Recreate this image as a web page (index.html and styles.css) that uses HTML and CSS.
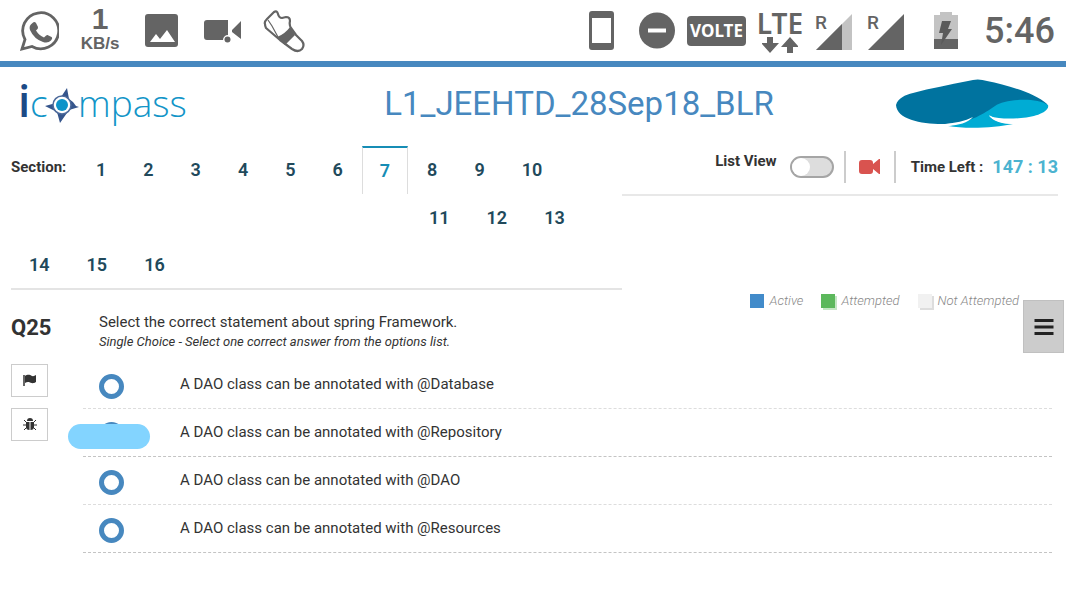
FILE: index.html
```html
<!DOCTYPE html>
<html lang="en">
<head>
<meta charset="utf-8">
<meta name="viewport" content="width=device-width, initial-scale=1">
<title>iCompass</title>
<link rel="stylesheet" href="styles.css">
</head>
<body>
<div class="status">
  <div class="status-left">
    <svg width="40" height="50" viewBox="0 0 40 50"><path d="M3 43l3-9.500A18 18 0 1 1 13 40.500z" fill="none" stroke="#646464" stroke-width="2.800"/><path d="M13.500 17q2-2 3.500 0l2 4q.5 1.500-2 3.500 3 5 8 7 2.500-3 3.500-2.500l4 2q1.500 1-.5 3.500-3 3-8 1.500-9-3-13-12-1.500-4.500 2.500-7z" fill="#646464"/></svg>
    <div class="speed"><span class="speed-value">1</span><span class="speed-unit">KB/s</span></div>
    <svg width="42" height="50" viewBox="0 0 42 50"><rect x="4" y="8" width="33" height="33" rx="3" fill="#646464"/><path d="M9 36l6-8 4 5 7-9 8 12z" fill="#fff"/></svg>
    <svg width="40" height="50" viewBox="0 0 40 50"><path d="M4 14h21v15a5 5 0 0 0-5 5H4q-3 0-3-3V17q0-3 3-3zM29 24l9-9v18l-9-7z" fill="#646464"/><circle cx="24.500" cy="33.500" r="3" fill="#646464"/></svg>
    <svg width="42" height="50" viewBox="0 0 42 50"><path d="M2 18Q1 16 4 13l7-7q3-2 4 2 1 4 4 4l4-1q4 0 4 4-1 4 1 7l5 7 6 6q3 4 0 8-4 4-10 0L17 34 3 22q-1-2-1-4z" fill="none" stroke="#646464" stroke-width="2.200" stroke-linejoin="round"/><path d="M14 31q8-3 13-10l5 8-10 10z" fill="#646464"/><path d="M5 14l4 6 6 11" fill="none" stroke="#646464" stroke-width="1.200"/></svg>
  </div>
  <div class="status-right">
    <svg width="38" height="50" viewBox="0 0 38 50"><path fill-rule="evenodd" d="M3 5h19q3 0 3 3v33q0 3-3 3H3q-3 0-3-3V8q0-3 3-3zm0 7v25h19V12z" fill="#646464"/></svg>
    <svg width="36" height="50" viewBox="0 0 36 50"><circle cx="18" cy="24.500" r="18" fill="#646464"/><path d="M9 24.500h18" stroke="#fff" stroke-width="4"/></svg>
    <span class="volte">VOLTE</span>
    <div class="lte"><span>LTE</span><svg width="36" height="16" viewBox="0 0 36 16"><path d="M5 0h6v6h6l-9 10-9-10h6zM25 16h6v-6h6L28 0l-9 10h6z" fill="#646464"/></svg></div>
    <div class="signal"><span>R</span><svg width="36" height="36" viewBox="0 0 36 36"><path d="M36 0v36H0z" fill="#c3c3c3"/><path d="M26 10v26H0z" fill="#646464"/></svg></div>
    <div class="signal"><span>R</span><svg width="36" height="36" viewBox="0 0 36 36"><path d="M36 0v36H0z" fill="#646464"/></svg></div>
    <svg width="56" height="50" viewBox="0 0 56 50"><path d="M16 9h6V6h12v3h6v24H16z" fill="#c3c3c3"/><path d="M16 33h24v10H16z" fill="#646464"/><path d="M24 15h9l-3 8h4L23 39l2-12h-4z" fill="#5a5a5a"/></svg>
    <time class="clock">5:46</time>
  </div>
</div>

<header class="header">
  <svg class="brand" width="172" height="50" viewBox="0 0 172 50" role="img" aria-label="icompass">
    <text class="brand-i" x="0" y="38">i</text>
    <text class="brand-word" x="12" y="38">c</text>
    <path d="M49 9l2 11 4 3 3 4 3 1-10 3-9 13-3-11-12-6 11-3 5-6z" fill="#35558c"/>
    <circle cx="44" cy="26" r="9" fill="#fff" stroke="#4d6a9b" stroke-width="1.500"/>
    <circle cx="44" cy="26" r="6" fill="#0d93c9"/>
    <text class="brand-word" x="60" y="38">mpass</text>
  </svg>
  <h1 class="title">L1_JEEHTD_28Sep18_BLR</h1>
  <svg width="154" height="52" viewBox="0 0 154 52"><path d="M1 27C3 20 10 17 18 15c18-5 36-8 55-12q10-3 19 0c20 4 48 12 60 23l1 4c-12-8-35-9-47-1-14 9-22 16-42 16C40 48 2 45 1 27z" fill="#00739f"/><path d="M153 27c-12-8-43-6-53 1-12 8-22 15-47 20 17 3 47 2 65-2-10 0-20-4-24-8 10 3 21 3 32 2 16-1 29-7 27-13z" fill="#00acd4"/><path d="M50 46c10-1 20-3 28-7-5 6-15 8-24 9zM94 37c8 5 16 7 27 7l-4 2c-10 0-20-3-23-9z" fill="#fff"/></svg>
</header>

<main>
  <div class="toolbar">
    <nav class="tabs" aria-label="Sections">
      <div class="tab-row"><span class="tabs-label">Section:</span><a class="tab" href="#1">1</a><a class="tab" href="#2">2</a><a class="tab" href="#3">3</a><a class="tab" href="#4">4</a><a class="tab" href="#5">5</a><a class="tab" href="#6">6</a><a class="tab tab-active" href="#7" aria-current="page">7</a><a class="tab" href="#8">8</a><a class="tab" href="#9">9</a><a class="tab" href="#10">10</a></div>
      <div class="tab-row tab-row-offset"><a class="tab" href="#11">11</a><a class="tab" href="#12">12</a><a class="tab" href="#13">13</a></div>
      <div class="tab-row"><a class="tab" href="#14">14</a><a class="tab" href="#15">15</a><a class="tab" href="#16">16</a></div>
    </nav>
    <div class="tools">
      <label class="list-label" for="list-view">List View</label>
      <input class="toggle" id="list-view" type="checkbox">
      <button class="camera" type="button" aria-label="Camera"><svg width="22" height="16" viewBox="0 0 22 16"><path d="M3 1h8q3 0 3 3v1l6-5h1v15h-1l-6-5v2q0 3-3 3H3q-3 0-3-3V4q0-3 3-3z" fill="#d9534f"/></svg></button>
      <div class="timer"><span>Time Left :</span><span class="timer-value">147 : 13</span></div>
    </div>
  </div>

  <div class="legend">
    <span class="key"><i class="swatch active"></i>Active</span>
    <span class="key"><i class="swatch attempted"></i>Attempted</span>
    <span class="key"><i class="swatch pending"></i>Not Attempted</span>
  </div>
  <button class="menu" type="button" aria-label="Menu"><svg width="20" height="18" viewBox="0 0 20 18"><path d="M2 2.500h16M2 9h16M2 15.500h16" stroke="#222" stroke-width="3" stroke-linecap="square"/></svg></button>

  <section class="question">
    <div class="side">
      <h2 class="number">Q25</h2>
      <button class="tool" type="button" aria-label="Flag question"><svg width="14" height="13" viewBox="0 0 14 13"><path d="M1 1v11" stroke="#333" stroke-width="1.500"/><path d="M2 2c3-2 5-1 7 0q2 .5 4-1v7c-3 2-5 1-7 0q-2-.5-4 1z" fill="#333"/></svg></button>
      <button class="tool" type="button" aria-label="Report a problem"><svg width="14" height="13" viewBox="0 0 14 13"><path d="M4 3q0-3 3-3t3 3z" fill="#333"/><path d="M4 4h2.500v8Q3 12 3 9V5zM7.500 4H10l1 1v4q0 3-3.500 3z" fill="#333"/><path d="M1 2l3 3M13 2l-3 3M0 7h4M10 7h4M1 12l3-3M13 12l-3-3" stroke="#333"/></svg></button>
    </div>
    <fieldset class="body">
      <legend class="prompt">Select the correct statement about spring Framework.</legend>
      <p class="hint">Single Choice - Select one correct answer from the options list.</p>
      <div class="option"><input type="radio" name="answer" id="a1"><label for="a1">A DAO class can be annotated with @Database</label></div>
      <div class="option option-dark"><input type="radio" name="answer" id="a2"><label for="a2">A DAO class can be annotated with @Repository</label><span class="marker"></span></div>
      <div class="option"><input type="radio" name="answer" id="a3"><label for="a3">A DAO class can be annotated with @DAO</label></div>
      <div class="option option-dark"><input type="radio" name="answer" id="a4"><label for="a4">A DAO class can be annotated with @Resources</label></div>
    </fieldset>
  </section>
</main>
</body>
</html>
```

FILE: styles.css
```css
* { box-sizing: border-box; }
body { margin: 0; background: #fff; color: #333; font-family: Roboto, "Liberation Sans", sans-serif; font-size: 15px; }
svg { display: block; flex: none; }
button { padding: 0; cursor: pointer; }

.status { display: flex; justify-content: space-between; padding: 6px 12px 5px 19px; border-bottom: 6px solid #4788bf; color: #646464; }
.status-left { display: flex; gap: 20px; }
.status-right { display: flex; gap: 12px; align-items: center; }
.speed { width: 42px; display: flex; flex-direction: column; align-items: center; font-family: "Liberation Sans", Arial, sans-serif; font-weight: 700; }
.speed-value { font-size: 30px; line-height: 26px; }
.speed-unit { font-size: 17px; line-height: 24px; }
.volte { width: 59px; padding: 4px 0; border-radius: 4px; background: #646464; color: #fff; font: 700 17px/22px "Noto Sans", sans-serif; text-align: center; }
.lte { width: 44px; display: flex; flex-direction: column; align-items: center; font: 600 28px/27px "Noto Sans", sans-serif; }
.signal { position: relative; width: 40px; padding: 2px 0 0 2px; }
.signal span { position: absolute; left: 1px; top: 0; font-size: 19px; line-height: 22px; font-weight: 500; }
.clock { width: 70px; margin-left: -2px; font-size: 36px; line-height: 50px; font-weight: 500; }

.header { display: grid; grid-template-columns: 245px 1fr 154px; align-items: center; padding: 11px 17px 16px 18px; }
.brand { overflow: visible; }
.brand-i { font: 600 44px "Open Sans", sans-serif; fill: #1b4a86; }
.brand-word { font: 300 37px "Open Sans", sans-serif; fill: #1295c8; }
.title { margin: 0; text-align: center; font-size: 33px; line-height: 40px; font-weight: 400; color: #4788bf; }

main { position: relative; padding: 0 8px 0 11px; }
.toolbar { display: flex; align-items: flex-start; }
.tabs { flex: 0 0 58.4%; border-bottom: 2px solid #e4e4e4; }
.tab-row { display: flex; gap: 1px; }
.tab-row-offset { padding-left: 400px; }
.tabs-label { width: 66px; font-size: 15px; line-height: 42px; font-weight: 700; }
.tab { padding: 0 18px; font-size: 18px; line-height: 47px; font-weight: 600; color: #21495b; text-decoration: none; }
.tab-active { padding: 0 17px; border: 1px solid #ddd; border-width: 2px 1px 0; border-top-color: #168db5; line-height: 46px; color: #168db5; }
.tools { flex: 1; display: flex; align-items: center; justify-content: flex-end; height: 50px; padding-bottom: 7px; border-bottom: 2px solid #e8e8e8; font-weight: 700; }
.list-label { align-self: flex-start; line-height: 30px; }
.toggle { appearance: none; display: flex; width: 44px; height: 22px; margin: 0 10px 0 13px; border: 2px solid #a5a5a5; border-radius: 11px; background: #ddd; }
.toggle::before { content: ""; width: 18px; height: 18px; border-radius: 50%; background: #fff; }
.camera { height: 32px; padding: 0 13px; border: 2px solid #ccc; border-width: 0 2px; background: none; }
.timer { display: flex; align-items: center; gap: 9px; margin-left: 15px; white-space: nowrap; }
.timer-value { font-size: 18px; color: #4cb3d0; }

.legend { display: flex; justify-content: flex-end; gap: 18px; padding: 1px 39px 1px 0; font-size: 13px; line-height: 20px; font-style: italic; font-weight: 300; color: #888; }
.key { display: flex; align-items: center; gap: 6px; }
.swatch { width: 14px; height: 14px; }
.active { background: #428bca; }
.attempted { background: #5cb85c; box-shadow: 2px 2px 0 #c4e6c4; }
.pending { background: #f1f1f1; box-shadow: 2px 2px 0 #ddd; }
.menu { position: absolute; right: 2px; top: 154px; width: 41px; height: 53px; display: flex; align-items: center; justify-content: center; border: 1px solid #c0c0c0; background: #ccc; }

.question { display: grid; grid-template-columns: 72px 1fr; padding-right: 6px; }
.side { display: flex; flex-direction: column; gap: 11px; }
.number { margin: 0; padding-bottom: 9px; font-size: 22px; line-height: 32px; font-weight: 700; }
.tool { display: flex; align-items: center; justify-content: center; width: 37px; height: 33px; border: 1px solid #ccc; background: #fff; }
.body { margin: 0; padding: 0; border: 0; min-width: 0; }
.prompt { padding: 0 0 0 16px; line-height: 20px; }
.hint { margin: 0; padding: 0 0 9px 16px; font-size: 13px; line-height: 20px; font-style: italic; }
.option { position: relative; display: flex; align-items: center; gap: 56px; height: 48px; padding: 3px 0 0 16px; border-bottom: 1px dashed #ddd; }
.option-dark { border-bottom-color: #c4c4c4; }
.option input { appearance: none; flex: none; width: 25px; height: 25px; margin: 0; border: 5px solid #4788bf; border-radius: 50%; background: #fff; }
.option label { padding-bottom: 4px; line-height: 20px; }
.marker { position: absolute; left: -15px; top: 15px; width: 82px; height: 25px; border-radius: 13px; background: #83d4ff; }
```
